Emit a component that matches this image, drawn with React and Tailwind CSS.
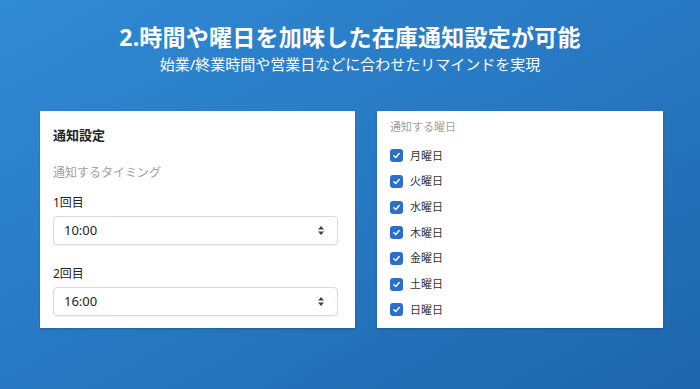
import React from 'react';

const FONT = { fontFamily: '"Noto Sans", "Noto Sans CJK JP", sans-serif' };

const days = ['月曜日', '火曜日', '水曜日', '木曜日', '金曜日', '土曜日', '日曜日'];

const Caret = () => (
  <svg width="8" height="11" viewBox="0 0 8 11" className="text-gray-700">
    <path d="M4 1 L7 4.5 H1 Z" fill="currentColor" />
    <path d="M4 10 L7 6.5 H1 Z" fill="currentColor" />
  </svg>
);

const TimeSelect = ({ value }) => (
  <div className="h-[29px] w-full rounded-[4px] border border-[#d9d9d9] bg-white flex items-center justify-between pl-[10px] pr-[12px] shadow-[0_1px_1px_rgba(0,0,0,0.05)]">
    <span className="text-[13px] text-[#222]">{value}</span>
    <Caret />
  </div>
);

const Check = () => (
  <div className="w-[13px] h-[13px] rounded-[3px] bg-[#2c6ecb] flex items-center justify-center">
    <svg width="9" height="9" viewBox="0 0 10 10">
      <path d="M2 5.2 L4.2 7.3 L8 2.8" fill="none" stroke="white" strokeWidth="1.6" strokeLinecap="round" strokeLinejoin="round" />
    </svg>
  </div>
);

export default function App() {
  return (
    <div style={FONT} className="w-[700px] h-[389px] overflow-hidden bg-gradient-to-br from-[#318ad4] via-[#2778c2] to-[#1e66ab] flex flex-col items-center">
      {/* 見出し */}
      <h1 className="mt-[22px] text-white font-bold text-[23px] leading-[30px] tracking-[0.01em]">
        2.時間や曜日を加味した在庫通知設定が可能
      </h1>
      <p className="mt-[2px] text-white text-[15px] leading-[20px]">
        始業/終業時間や営業日などに合わせたリマインドを実現
      </p>

      <div className="mt-[37px] w-full flex gap-[22px] px-[40px] pr-[37px]">
        {/* 左カード */}
        <div className="w-[315px] h-[217px] bg-white shadow-[0_1px_2px_rgba(0,0,0,0.2)] pl-[13px] pr-[17px] pt-[14px]">
          <div className="text-[13px] font-bold text-[#222] leading-[20px]">通知設定</div>
          <div className="mt-[19px] text-[12px] text-[#a0a0a0] leading-[18px]">通知するタイミング</div>
          <div className="mt-[12px] text-[12px] text-[#222] leading-[18px]">1回目</div>
          <div className="mt-[4px]"><TimeSelect value="10:00" /></div>
          <div className="mt-[20px] text-[12px] text-[#222] leading-[18px]">2回目</div>
          <div className="mt-[4px]"><TimeSelect value="16:00" /></div>
        </div>

        {/* 右カード */}
        <div className="w-[286px] h-[217px] bg-white shadow-[0_1px_2px_rgba(0,0,0,0.2)] px-[13px] pt-[8px]">
          <div className="text-[11px] text-[#a0a0a0] leading-[16px]">通知する曜日</div>
          <div className="mt-[8px] flex flex-col">
            {days.map((d) => (
              <div key={d} className="h-[25.7px] flex items-center gap-[7px]">
                <Check />
                <span className="text-[11px] text-[#333]">{d}</span>
              </div>
            ))}
          </div>
        </div>
      </div>
    </div>
  );
}
